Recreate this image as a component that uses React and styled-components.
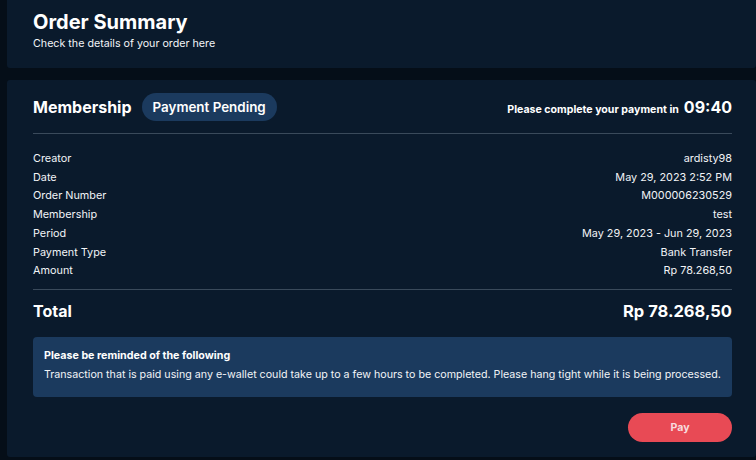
import React from "react";
import styled, { createGlobalStyle } from "styled-components";

const GlobalStyle = createGlobalStyle`
  * { box-sizing: border-box; }
  body {
    margin: 0;
    background: #050e18;
    font-family: Inter, "Noto Sans", sans-serif;
    color: #ffffff;
    overflow: hidden;
  }
`;

const details = [
  { label: "Creator", value: "ardisty98" },
  { label: "Date", value: "May 29, 2023 2:52 PM" },
  { label: "Order Number", value: "M000006230529" },
  { label: "Membership", value: "test" },
  { label: "Period", value: "May 29, 2023 - Jun 29, 2023" },
  { label: "Payment Type", value: "Bank Transfer" },
  { label: "Amount", value: "Rp 78.268,50" },
];

function App() {
  return (
    <>
      <GlobalStyle />
      <Page>
        <HeaderCard>
          <Title>Order Summary</Title>
          <Subtitle>Check the details of your order here</Subtitle>
        </HeaderCard>
        <Card>
          <TopRow>
            <Left>
              <Heading>Membership</Heading>
              <Badge>Payment Pending</Badge>
            </Left>
            <Timer>
              <TimerLabel>Please complete your payment in</TimerLabel>
              <TimerValue>09:40</TimerValue>
            </Timer>
          </TopRow>
          <Divider $space={12} />
          <List>
            {details.map((d) => (
              <Row key={d.label}>
                <span>{d.label}</span>
                <span>{d.value}</span>
              </Row>
            ))}
          </List>
          <Divider $space={9} />
          <TotalRow>
            <Heading>Total</Heading>
            <TotalValue>Rp 78.268,50</TotalValue>
          </TotalRow>
          <Notice>
            <NoticeTitle>Please be reminded of the following</NoticeTitle>
            <NoticeText>
              Transaction that is paid using any e-wallet could take up to a few
              hours to be completed. Please hang tight while it is being
              processed.
            </NoticeText>
          </Notice>
          <Actions>
            <PayButton>Pay</PayButton>
          </Actions>
        </Card>
      </Page>
    </>
  );
}

export default App;

const Page = styled.div`
  display: flex;
  flex-direction: column;
  gap: 12px;
  padding-left: 7px;
  height: 457px;
`;

const HeaderCard = styled.header`
  flex-shrink: 0;
  background: #0a1a2c;
  height: 68px;
  padding: 9px 24px 0 26px;
  border-radius: 0 0 3px 3px;
`;

const Title = styled.h1`
  margin: 0;
  font-size: 20px;
  font-weight: 700;
  line-height: 26px;
`;

const Subtitle = styled.p`
  margin: 2px 0 0;
  font-size: 10.7px;
  line-height: 14px;
  color: #f2f4f7;
`;

const Card = styled.main`
  flex: 1;
  background: #0a1a2c;
  border-radius: 3px;
  padding: 13px 24px 0 26px;
  display: flex;
  flex-direction: column;
`;

const TopRow = styled.div`
  display: flex;
  justify-content: space-between;
  align-items: center;
  height: 28px;
`;

const Left = styled.div`
  display: flex;
  align-items: center;
  gap: 10px;
`;

const Heading = styled.h2`
  margin: 0;
  font-size: 16px;
  font-weight: 700;
`;

const Badge = styled.span`
  background: #1b3a5e;
  border-radius: 14px;
  height: 28px;
  padding: 0 11px;
  display: inline-flex;
  align-items: center;
  font-size: 13.4px;
  font-weight: 600;
`;

const Timer = styled.div`
  display: flex;
  align-items: baseline;
  gap: 5px;
`;

const TimerLabel = styled.span`
  font-size: 10.6px;
  font-weight: 700;
`;

const TimerValue = styled.span`
  font-size: 16px;
  font-weight: 700;
`;

const Divider = styled.hr`
  border: none;
  border-top: 1px solid #3a4a5b;
  margin: ${({ $space }) => $space}px 0 0;
  width: 100%;
`;

const List = styled.div`
  display: flex;
  flex-direction: column;
  padding-top: 15px;
`;

const Row = styled.div`
  display: flex;
  justify-content: space-between;
  font-size: 10.85px;
  line-height: 18.7px;
  color: #f2f4f7;
`;

const TotalRow = styled.div`
  display: flex;
  justify-content: space-between;
  align-items: center;
  margin-top: 10px;
  height: 22px;
`;

const TotalValue = styled.span`
  font-size: 16.5px;
  font-weight: 700;
`;

const Notice = styled.div`
  margin-top: 15px;
  background: #1b3a5e;
  border-radius: 4px;
  padding: 12px 5px 15px 11px;
`;

const NoticeTitle = styled.p`
  margin: 0;
  font-size: 10.7px;
  font-weight: 700;
  line-height: 14px;
`;

const NoticeText = styled.p`
  margin: 5px 0 0;
  font-size: 10.68px;
  line-height: 14px;
  color: #f2f4f7;
`;

const Actions = styled.div`
  display: flex;
  justify-content: flex-end;
  margin-top: 16px;
`;

const PayButton = styled.button`
  width: 104px;
  height: 29px;
  border: none;
  border-radius: 15px;
  background: #e84a55;
  color: #f7dadd;
  font-family: Inter, sans-serif;
  font-size: 10.6px;
  font-weight: 700;
  cursor: pointer;
`;
